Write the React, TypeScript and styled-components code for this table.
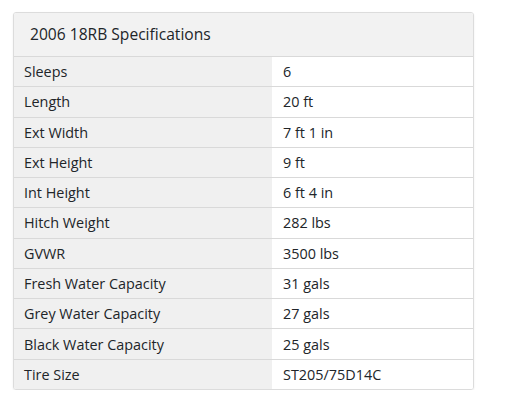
import React from "react";
import styled, { createGlobalStyle } from "styled-components";

const Global = createGlobalStyle`
  html, body { margin: 0; padding: 0; background: #ffffff; }
  body { font-family: "Open Sans", "Lato", sans-serif; color: #212529; }
`;

const Page = styled.div`
  padding: 12px 42px 0 13px;
`;

const Card = styled.div`
  width: 461px;
  box-sizing: border-box;
  border: 1px solid #dcdcdc;
  border-radius: 3px;
  overflow: hidden;
  box-shadow: 0 1px 2px rgba(0, 0, 0, 0.08);
`;

const Header = styled.div`
  height: 42px;
  padding-bottom: 1px;
  display: flex;
  align-items: center;
  padding-left: 16px;
  background: #f2f2f2;
  font-size: 15.6px;
`;

const Table = styled.div`
  display: grid;
  grid-template-columns: 258px 1fr;
`;

const Cell = styled.div<{ $label?: boolean }>`
  height: 29.27px;
  display: flex;
  align-items: center;
  padding-left: ${(p) => (p.$label ? "10px" : "11px")};
  background: ${(p) => (p.$label ? "#f0f0f0" : "#ffffff")};
  border-top: 1px solid #d9d9d9;
  font-size: 14.4px;
`;

const rows: [string, string][] = [
  ["Sleeps", "6"],
  ["Length", "20 ft"],
  ["Ext Width", "7 ft 1 in"],
  ["Ext Height", "9 ft"],
  ["Int Height", "6 ft 4 in"],
  ["Hitch Weight", "282 lbs"],
  ["GVWR", "3500 lbs"],
  ["Fresh Water Capacity", "31 gals"],
  ["Grey Water Capacity", "27 gals"],
  ["Black Water Capacity", "25 gals"],
  ["Tire Size", "ST205/75D14C"],
];

export default function App() {
  return (
    <>
      <Global />
      <Page>
        <Card>
          <Header>2006 18RB Specifications</Header>
          <Table>
            {rows.map(([k, v]) => (
              <React.Fragment key={k}>
                <Cell $label>{k}</Cell>
                <Cell>{v}</Cell>
              </React.Fragment>
            ))}
          </Table>
        </Card>
      </Page>
    </>
  );
}
